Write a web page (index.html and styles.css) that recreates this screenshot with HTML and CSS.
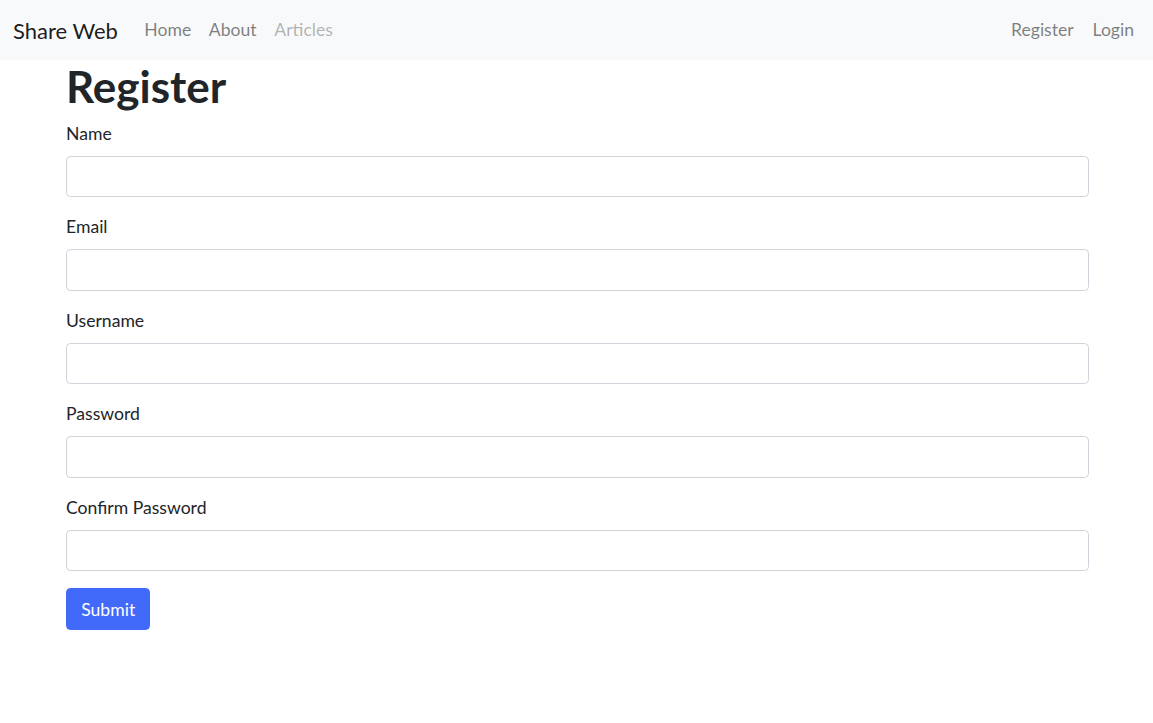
FILE: index.html
```html
<!DOCTYPE html>
<html lang="en">
<head>
    <meta charset="UTF-8">
    <meta name="viewport" content="width=device-width, initial-scale=1.0">
    <title>Share Web - Register</title>
    <link rel="stylesheet" href="styles.css">
</head>
<body>
    <nav class="navbar">
        <a class="brand" href="#">Share Web</a>
        <ul class="nav-links">
            <li><a href="#">Home</a></li>
            <li><a href="#">About</a></li>
            <li><a class="disabled" href="#">Articles</a></li>
        </ul>
        <ul class="nav-links nav-right">
            <li><a href="#">Register</a></li>
            <li><a href="#">Login</a></li>
        </ul>
    </nav>

    <div class="container">
        <h1>Register</h1>
        <form id="registerForm">
            <div class="form-group">
                <label for="name">Name</label>
                <input type="text" id="name" name="name">
            </div>
            <div class="form-group">
                <label for="email">Email</label>
                <input type="text" id="email" name="email">
            </div>
            <div class="form-group">
                <label for="username">Username</label>
                <input type="text" id="username" name="username">
            </div>
            <div class="form-group">
                <label for="password">Password</label>
                <input type="password" id="password" name="password">
            </div>
            <div class="form-group">
                <label for="password2">Confirm Password</label>
                <input type="password" id="password2" name="password2">
            </div>
            <input type="submit" class="btn-primary" value="Submit">
        </form>
    </div>
</body>
</html>
```

FILE: styles.css
```css
body {
    margin: 0;
    font-family: Lato, "Noto Sans", sans-serif;
    font-size: 17.6px;
    line-height: 1.5;
    color: #212529;
    background-color: #fff;
}

a {
    text-decoration: none;
}

.navbar {
    display: flex;
    align-items: center;
    height: 60px;
    padding: 0 13px;
    background-color: #f8f9fa;
    box-sizing: border-box;
}

.brand {
    font-size: 22px;
    color: rgba(0, 0, 0, 0.9);
    margin-right: 17.6px;
}

.nav-links {
    display: flex;
    list-style: none;
    margin: 0;
    padding: 0;
}

.nav-links a {
    display: block;
    padding: 8.8px;
    color: rgba(0, 0, 0, 0.5);
}

.nav-links a.disabled {
    color: rgba(0, 0, 0, 0.3);
}

.nav-right {
    margin-left: auto;
}

.nav-right li:first-child a {
    padding-right: 10px;
}

.nav-right li:last-child a {
    padding-right: 6px;
}

.container {
    max-width: 1023px;
    margin: 0 auto;
    padding: 0 64px 0 66px;
}

h1 {
    margin: 0 0 7.8px;
    font-size: 44px;
    font-weight: 700;
    line-height: 1.2;
}

label {
    display: block;
    margin-bottom: 8.8px;
}

.form-group {
    margin-bottom: 16.8px;
}

input[type="text"],
input[type="password"] {
    display: block;
    width: 100%;
    height: 41.5px;
    padding: 6px 13px;
    border: 1px solid #ced4da;
    border-radius: 4.4px;
    box-sizing: border-box;
    font-family: inherit;
    font-size: 17.6px;
}

.btn-primary {
    background-color: #4169fa;
    color: #fff;
    border: 1px solid #4169fa;
    border-radius: 4.4px;
    padding: 6.6px 14.2px;
    height: 42px;
    font-family: inherit;
    font-size: 17.6px;
    cursor: pointer;
}
```
